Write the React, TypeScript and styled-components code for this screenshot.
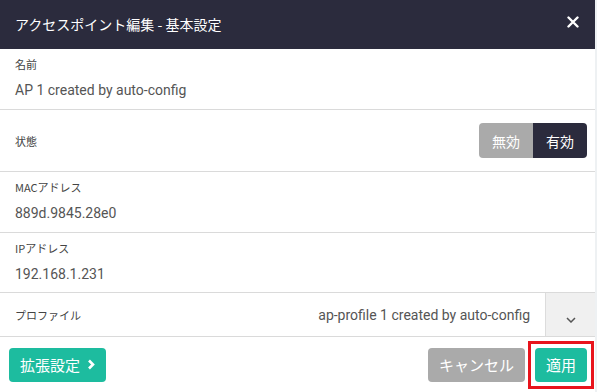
import styled, { createGlobalStyle } from "styled-components";

const Global = createGlobalStyle`
  html, body {
    margin: 0;
    padding: 0;
    background: #ffffff;
  }
  body {
    font-family: "Roboto", "Noto Sans CJK JP", sans-serif;
  }
`;

const Dialog = styled.div`
  width: 597px;
  height: 392px;
  background: #fff;
  display: flex;
  flex-direction: column;
  box-sizing: border-box;
  border-right: 2px solid #eef1f3;
`;

const Header = styled.header`
  height: 49px;
  flex: none;
  background: #2b2b3d;
  display: flex;
  align-items: center;
  justify-content: space-between;
  padding: 0 12px 2px 15px;
  box-sizing: border-box;

  & h1 {
    margin: 0;
    font-size: 14px;
    font-weight: 400;
    color: #fff;
    font-family: "Noto Sans CJK JP", sans-serif;
  }
`;

const CloseButton = styled.button`
  border: none;
  background: none;
  padding: 0;
  width: 20px;
  height: 20px;
  display: flex;
  align-items: center;
  justify-content: center;
  margin-bottom: 4px;
  cursor: pointer;
`;

const Field = styled.div<{ $h: number }>`
  height: ${p => p.$h}px;
  box-sizing: border-box;
  border-bottom: 1px solid #dadada;
  padding: 8px 15px 0;
  display: flex;
  flex-direction: column;
`;

const Label = styled.div`
  font-size: 11px;
  color: #444;
  font-family: "Noto Sans CJK JP", sans-serif;
  line-height: 14px;
`;

const Value = styled.div`
  margin-top: 10px;
  font-size: 14px;
  color: #555;
  line-height: 18px;
`;

const InlineRow = styled.div<{ $h: number }>`
  height: ${p => p.$h}px;
  box-sizing: border-box;
  border-bottom: 1px solid #dadada;
  padding-left: 15px;
  display: flex;
  align-items: center;
  justify-content: space-between;
`;

const Toggle = styled.div`
  display: flex;
  margin-right: 8px;
  border-radius: 4px;
  overflow: hidden;
`;

const ToggleOption = styled.button<{ $active: boolean }>`
  border: none;
  height: 35px;
  padding: 0 13px;
  font-size: 14px;
  font-family: "Noto Sans CJK JP", sans-serif;
  color: #fff;
  background: ${p => (p.$active ? "#2b2b3d" : "#aaaaaa")};
`;

const SelectValue = styled.div`
  margin-left: auto;
  padding-right: 15px;
  font-size: 14px;
  color: #555;
`;

const SelectButton = styled.div`
  width: 50px;
  align-self: stretch;
  background: #f0f0f0;
  border-left: 1px solid #dcdcdc;
  display: flex;
  align-items: flex-end;
  justify-content: center;
  padding-bottom: 13px;
  box-sizing: border-box;
`;

const Footer = styled.footer`
  flex: 1;
  display: flex;
  align-items: center;
  padding: 0 10px 0 9px;
`;

const Button = styled.button<{ $kind: "primary" | "muted" }>`
  height: 34px;
  border: none;
  border-radius: 4px;
  padding: 0 11px;
  font-size: 15px;
  font-family: "Noto Sans CJK JP", sans-serif;
  color: #fff;
  background: ${p => (p.$kind === "primary" ? "#1dbc9f" : "#aaaaaa")};
  display: flex;
  align-items: center;
  gap: 7px;
`;

const Spacer = styled.div`
  flex: 1;
`;

const Highlight = styled.div`
  border: 3px solid #e8141c;
  padding: 4px;
  margin: 0 -9px 0 3px;
  display: flex;
`;

export default function App() {
  return (
    <Dialog>
      <Global />
      <Header>
        <h1>アクセスポイント編集 - 基本設定</h1>
        <CloseButton aria-label="close">
          <svg width="12" height="12" viewBox="0 0 12 12">
            <path d="M1.5 1.5 L10.5 10.5 M10.5 1.5 L1.5 10.5" stroke="#fff" strokeWidth="2.4" strokeLinecap="round" />
          </svg>
        </CloseButton>
      </Header>
      <Field $h={61}>
        <Label>名前</Label>
        <Value>AP 1 created by auto-config</Value>
      </Field>
      <InlineRow $h={62}>
        <Label>状態</Label>
        <Toggle>
          <ToggleOption $active={false}>無効</ToggleOption>
          <ToggleOption $active>有効</ToggleOption>
        </Toggle>
      </InlineRow>
      <Field $h={61}>
        <Label>MACアドレス</Label>
        <Value>889d.9845.28e0</Value>
      </Field>
      <Field $h={60}>
        <Label>IPアドレス</Label>
        <Value>192.168.1.231</Value>
      </Field>
      <InlineRow $h={44}>
        <Label>プロファイル</Label>
        <SelectValue>ap-profile 1 created by auto-config</SelectValue>
        <SelectButton>
          <svg width="10" height="6" viewBox="0 0 10 6">
            <path d="M1 1 L5 5 L9 1" stroke="#555" strokeWidth="1.5" fill="none" />
          </svg>
        </SelectButton>
      </InlineRow>
      <Footer>
        <Button $kind="primary">
          拡張設定
          <svg width="8" height="11" viewBox="0 0 8 11">
            <path d="M2 1.5 L6 5.5 L2 9.5" stroke="#fff" strokeWidth="2.6" fill="none" />
          </svg>
        </Button>
        <Spacer />
        <Button $kind="muted">キャンセル</Button>
        <Highlight>
          <Button $kind="primary">適用</Button>
        </Highlight>
      </Footer>
    </Dialog>
  );
}
